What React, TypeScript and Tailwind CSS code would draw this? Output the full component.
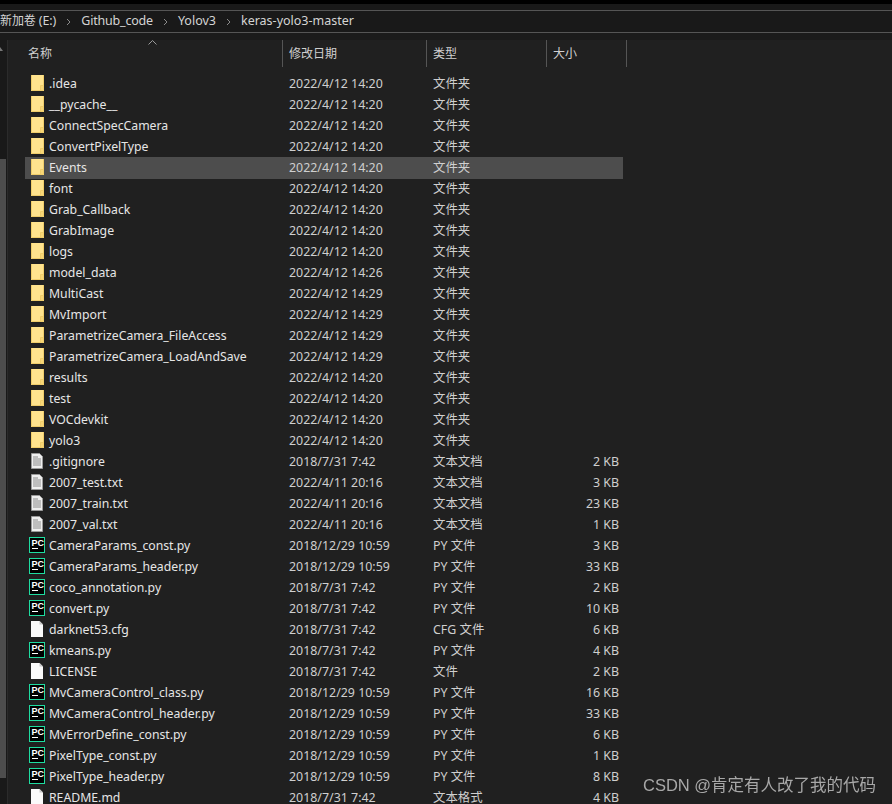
const folders: [string, string][] = [
  [".idea", "2022/4/12 14:20"],
  ["__pycache__", "2022/4/12 14:20"],
  ["ConnectSpecCamera", "2022/4/12 14:20"],
  ["ConvertPixelType", "2022/4/12 14:20"],
  ["Events", "2022/4/12 14:20"],
  ["font", "2022/4/12 14:20"],
  ["Grab_Callback", "2022/4/12 14:20"],
  ["GrabImage", "2022/4/12 14:20"],
  ["logs", "2022/4/12 14:20"],
  ["model_data", "2022/4/12 14:26"],
  ["MultiCast", "2022/4/12 14:29"],
  ["MvImport", "2022/4/12 14:29"],
  ["ParametrizeCamera_FileAccess", "2022/4/12 14:29"],
  ["ParametrizeCamera_LoadAndSave", "2022/4/12 14:29"],
  ["results", "2022/4/12 14:20"],
  ["test", "2022/4/12 14:20"],
  ["VOCdevkit", "2022/4/12 14:20"],
  ["yolo3", "2022/4/12 14:20"],
];

type FileRow = { name: string; date: string; type: string; size: string; icon: "text" | "py" | "blank" };

const files: FileRow[] = [
  { name: ".gitignore", date: "2018/7/31 7:42", type: "文本文档", size: "2 KB", icon: "text" },
  { name: "2007_test.txt", date: "2022/4/11 20:16", type: "文本文档", size: "3 KB", icon: "text" },
  { name: "2007_train.txt", date: "2022/4/11 20:16", type: "文本文档", size: "23 KB", icon: "text" },
  { name: "2007_val.txt", date: "2022/4/11 20:16", type: "文本文档", size: "1 KB", icon: "text" },
  { name: "CameraParams_const.py", date: "2018/12/29 10:59", type: "PY 文件", size: "3 KB", icon: "py" },
  { name: "CameraParams_header.py", date: "2018/12/29 10:59", type: "PY 文件", size: "33 KB", icon: "py" },
  { name: "coco_annotation.py", date: "2018/7/31 7:42", type: "PY 文件", size: "2 KB", icon: "py" },
  { name: "convert.py", date: "2018/7/31 7:42", type: "PY 文件", size: "10 KB", icon: "py" },
  { name: "darknet53.cfg", date: "2018/7/31 7:42", type: "CFG 文件", size: "6 KB", icon: "blank" },
  { name: "kmeans.py", date: "2018/7/31 7:42", type: "PY 文件", size: "4 KB", icon: "py" },
  { name: "LICENSE", date: "2018/7/31 7:42", type: "文件", size: "2 KB", icon: "blank" },
  { name: "MvCameraControl_class.py", date: "2018/12/29 10:59", type: "PY 文件", size: "16 KB", icon: "py" },
  { name: "MvCameraControl_header.py", date: "2018/12/29 10:59", type: "PY 文件", size: "33 KB", icon: "py" },
  { name: "MvErrorDefine_const.py", date: "2018/12/29 10:59", type: "PY 文件", size: "6 KB", icon: "py" },
  { name: "PixelType_const.py", date: "2018/12/29 10:59", type: "PY 文件", size: "1 KB", icon: "py" },
  { name: "PixelType_header.py", date: "2018/12/29 10:59", type: "PY 文件", size: "8 KB", icon: "py" },
  { name: "README.md", date: "2018/7/31 7:42", type: "文本格式", size: "4 KB", icon: "blank" },
];

function FolderIcon() {
  return (
    <svg width="15" height="16" viewBox="0 0 15 16" className="shrink-0 mb-[2px]">
      <rect x="1" y="0" width="13" height="16" fill="#ffe38e" />
      <path d="M1.5 0V15.5H13.5V0" fill="none" stroke="#f0cd6a" />
      <rect x="11" y="11" width="2" height="4" fill="#f8d677" />
      <path d="M10.5 15V10.5H13" fill="none" stroke="#f0cd6a" />
    </svg>
  );
}

function TextIcon() {
  return (
    <svg width="15" height="16" viewBox="0 0 15 16" className="shrink-0 mb-[2px]">
      <path d="M1.5 .5H9.5L12.5 3.5V15.5H1.5Z" fill="#efefef" stroke="#9a9a9a" />
      <path d="M3 4H8M3 6H11M3 8H11M3 10H11M3 12H11" stroke="#8c8c8c" />
    </svg>
  );
}

function BlankIcon() {
  return (
    <svg width="15" height="16" viewBox="0 0 15 16" className="shrink-0 mb-[2px]">
      <path d="M1 0H9.5L13 3.5V16H1Z" fill="#fafafa" />
      <path d="M9.5 0V3.5H13Z" fill="#c8c8c8" />
    </svg>
  );
}

function PyIcon() {
  return (
    <svg width="16" height="16" viewBox="0 0 16 16" className="shrink-0 -ml-px mb-[2px]">
      <rect x=".5" y=".5" width="15" height="15" fill="#000" stroke="#1fdca0" />
      <text x="2.4" y="8.8" fontSize="9" fontWeight="700" fill="#fff" fontFamily="'Liberation Sans', sans-serif">PC</text>
      <rect x="3" y="11" width="6" height="1" fill="#fff" />
    </svg>
  );
}

const icons = { text: TextIcon, py: PyIcon, blank: BlankIcon };

function Row({ name, date, type, size, icon: Icon, active }: { name: string; date: string; type: string; size?: string; icon: () => React.JSX.Element; active?: boolean }) {
  return (
    <div className={active ? "flex items-center h-[22px] -mb-px w-[598px] bg-[#4d4d4d]" : "flex items-center h-[22px] -mb-px w-[598px]"}>
      <div className="w-[264px] flex items-center pl-[5px] gap-[4px] text-[#e6e6e6] text-[12.25px]">
        <Icon />
        <span className="whitespace-nowrap">{name}</span>
      </div>
      <div className="w-[144px] text-[#cfcfcf] text-[12.4px] whitespace-nowrap">{date}</div>
      <div className="w-[120px] text-[#cfcfcf] text-[12.4px] whitespace-nowrap">{type}</div>
      <div className="w-[66px] text-right text-[#cfcfcf] text-[12.4px] whitespace-nowrap">{size}</div>
    </div>
  );
}

function Chevron() {
  return (
    <svg width="5" height="8" viewBox="0 0 5 8" className="mx-[10px] shrink-0">
      <path d="M1 1L4 4L1 7" fill="none" stroke="#8a8a8a" strokeWidth="1" />
    </svg>
  );
}

function HeaderCell({ label, width }: { label: string; width: string }) {
  return (
    <div className={`${width} h-[27px] flex items-center pl-[6px] border-r border-[#555] text-[#d0d0d0] text-[12px]`}>
      {label}
    </div>
  );
}

export default function App() {
  return (
    <div className="w-[892px] h-[804px] overflow-hidden flex flex-col bg-[#202020] text-[12.5px] font-['Noto_Sans','Noto_Sans_CJK_SC',sans-serif]">
      <div className="h-[4px] bg-black shrink-0" />
      <div className="h-[6px] bg-[#191919] shrink-0" />
      <div className="h-[23px] shrink-0 flex items-center bg-[#191919] border-y border-[#555] text-[#d4d4d4] text-[12.5px]">
        <span className="whitespace-nowrap tracking-[-0.1px]">
          <span className="text-[12px]">新加卷</span> (E:)
        </span>
        <Chevron />
        <span className="whitespace-nowrap tracking-[-0.2px]">Github_code</span>
        <Chevron />
        <span className="whitespace-nowrap">Yolov3</span>
        <Chevron />
        <span className="whitespace-nowrap">keras-yolo3-master</span>
      </div>
      <div className="h-[7px] shrink-0 bg-[#1b1b1b]" />
      <div className="flex-1 flex min-h-0">
        <div className="w-[8px] shrink-0 bg-[#191919] border-r border-[#2b2b2b] relative">
          <svg width="3" height="4" viewBox="0 0 3 4" className="absolute left-0 top-[7px]">
            <path d="M0 0L3 4H0Z" fill="#777" />
          </svg>
          <div className="absolute left-0 top-[119px] w-[6px] h-[619px] bg-[#4d4d4d]" />
        </div>
        <div className="flex-1 min-w-0">
          <div className="relative flex pl-[17px] h-[27px]">
            <svg width="9" height="5" viewBox="0 0 9 5" className="absolute left-[140px] top-0">
              <path d="M.5 4.5L4.5 .5L8.5 4.5" fill="none" stroke="#9a9a9a" />
            </svg>
            <div className="w-[258px] h-[27px] flex items-center pl-[3px] border-r border-[#555] text-[#d0d0d0] text-[12px]">名称</div>
            <HeaderCell label="修改日期" width="w-[144px]" />
            <HeaderCell label="类型" width="w-[120px]" />
            <HeaderCell label="大小" width="w-[80px]" />
          </div>
          <div className="h-[6px]" />
          <div className="pl-[17px] flex flex-col">
            {folders.map(([name, date], i) => (
              <Row key={name} name={name} date={date} type="文件夹" icon={FolderIcon} active={i === 4} />
            ))}
            {files.map((f) => (
              <Row key={f.name} name={f.name} date={f.date} type={f.type} size={f.size} icon={icons[f.icon]} />
            ))}
          </div>
        </div>
      </div>
      <div className="fixed left-[643px] top-[775px] text-[16.5px] leading-[20px] text-[#a8a8a8] whitespace-nowrap font-['Liberation_Sans','Noto_Sans_CJK_SC',sans-serif]">
        CSDN @肯定有人改了我的代码
      </div>
    </div>
  );
}
